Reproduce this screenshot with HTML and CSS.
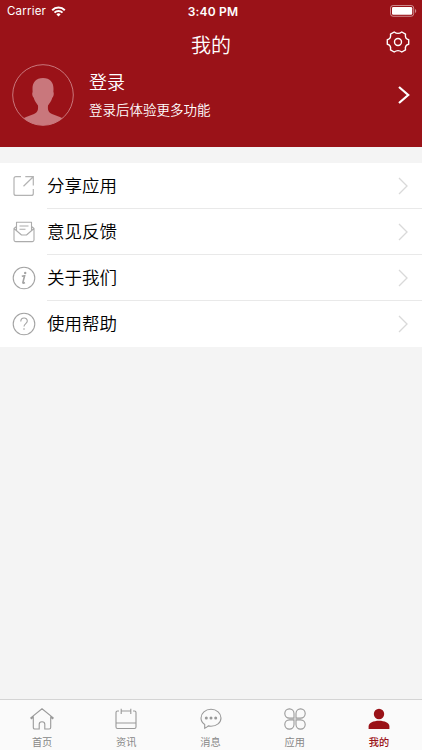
FILE: index.html
```html
<!DOCTYPE html>
<html lang="zh-CN">
<head>
  <meta charset="UTF-8">
  <meta name="viewport" content="width=device-width, initial-scale=1.0">
  <title>我的</title>
  <link rel="stylesheet" href="styles.css">
</head>
<body>
  <header class="header">
    <div class="status-bar">
      <div class="carrier">
        <span>Carrier</span>
        <svg width="15" height="11" viewBox="0 0 14 11" fill="none" stroke="#fff" stroke-width="2">
          <path d="M.7 4.2a8.9 8.9 0 0 1 12.6 0M3 6.6a5.6 5.6 0 0 1 8 0"/>
          <path d="M4.9 8.4a3 3 0 0 1 4.2 0L7 10.6z" fill="#fff" stroke="none"/>
        </svg>
      </div>
      <span class="time">3:40 PM</span>
      <svg class="battery" width="27" height="12" viewBox="0 0 27 12">
        <rect x=".5" y=".5" width="23.2" height="10.8" rx="2.6" fill="none" stroke="#fff" stroke-opacity=".5"/>
        <rect x="2" y="2" width="20.2" height="7.8" rx="1.2" fill="#fff"/>
        <path d="M25 4v4c1.7-.7 1.7-3.3 0-4z" fill="#fff" fill-opacity=".5"/>
      </svg>
    </div>
    <div class="title-bar">
      <h1>我的</h1>
      <svg class="settings" width="24" height="22" viewBox="0 0 24 22" fill="none" stroke="#fff" stroke-width="1.4" stroke-linejoin="round">
        <path d="M8.2 1Q12 3.8 15.8 1L19.5 3.2Q18.6 7.8 22.7 8.8V13.2Q18.6 14.2 19.5 18.8L15.8 21Q12 18.2 8.2 21L4.5 18.8Q5.4 14.2 1.3 13.2V8.8Q5.4 7.8 4.5 3.2Z"/>
        <circle cx="12" cy="11" r="3.5"/>
      </svg>
    </div>
    <div class="user">
      <svg class="avatar" width="62" height="62" viewBox="0 0 62 62">
        <circle cx="31" cy="31" r="30.3" fill="none" stroke="#c9777c" stroke-width="1"/>
        <path d="M31 14C24 14 20.3 18.5 20.5 25L20.6 28C19.8 29 20.3 32.8 21.7 33.8C22.5 36.8 24.5 39.5 26 41.5C26.3 45.5 26 48 22 50C18.500 51.700 15 52 11.500 54.300A30.300 30.300 0 0 0 31 61.300A30.300 30.300 0 0 0 50.500 54.300C47 52 43.500 51.700 40 50C36 48 35.700 45.500 36 41.500C37.500 39.500 39.500 36.800 40.300 33.800C41.700 32.800 42.200 29 41.400 28L41.500 25C41.700 18.500 38 14 31 14Z" fill="#c9777c"/>
      </svg>
      <div class="user-info">
        <h2>登录</h2>
        <p>登录后体验更多功能</p>
      </div>
      <svg class="user-arrow" width="12" height="18" viewBox="0 0 12 18" fill="none" stroke="#fff" stroke-width="2.2">
        <path d="M1 1l9.2 8L1 17"/>
      </svg>
    </div>
  </header>

  <ul class="menu">
    <li class="menu-item">
      <svg class="menu-icon" width="24" height="24" viewBox="0 0 24 24" fill="none" stroke="#b3b3b3" stroke-width="1.2">
        <path d="M9 2.6H4Q2 2.6 2 4.6V19.4Q2 21.4 4 21.4H19.3Q21.3 21.4 21.3 19.4V15M13.3 2.6H21.3V11.5M21 3L11.5 12.3"/>
      </svg>
      <div class="menu-label">
        <span>分享应用</span>
        <svg class="arrow" width="10" height="18" viewBox="0 0 10 18"><path d="M1 1l8 8-8 8"/></svg>
      </div>
    </li>
    <li class="menu-item">
      <svg class="menu-icon" width="24" height="24" viewBox="0 0 24 24" fill="none" stroke="#acacac" stroke-width="1.1" stroke-linejoin="round">
        <path d="M4.500 6.500L2 8.500V20Q2 21.600 3.600 21.600H20.400Q22 21.600 22 20V8.500L19.500 6.500M4.500 10.500V2.300H19.500V10.500M2 8.500L9.500 15H14.500L22 8.500M7.500 6H16.500M7.500 9.200H13.500"/>
      </svg>
      <div class="menu-label">
        <span>意见反馈</span>
        <svg class="arrow" width="10" height="18" viewBox="0 0 10 18"><path d="M1 1l8 8-8 8"/></svg>
      </div>
    </li>
    <li class="menu-item">
      <svg class="menu-icon" width="24" height="24" viewBox="0 0 24 24" fill="none" stroke="#a3a3a3">
        <circle cx="12" cy="12" r="10.8" stroke-width="1.1"/>
        <path d="M9.8 10.2l2.800-.5-1.700 6.600q-.2 1.500 2 .2" stroke-width="1.6"/>
        <circle cx="13.2" cy="6.9" r="1.2" fill="#a3a3a3" stroke="none"/>
      </svg>
      <div class="menu-label">
        <span>关于我们</span>
        <svg class="arrow" width="10" height="18" viewBox="0 0 10 18"><path d="M1 1l8 8-8 8"/></svg>
      </div>
    </li>
    <li class="menu-item">
      <svg class="menu-icon" width="24" height="24" viewBox="0 0 24 24" fill="none" stroke="#a3a3a3" stroke-width="1.1">
        <circle cx="12" cy="12" r="10.8"/>
        <path d="M8.800 9.600c0-4.700 6.500-4.600 6.500-.6 0 2.500-3.300 2.700-3.300 5.600"/>
        <circle cx="12" cy="17" r=".8" fill="#a3a3a3" stroke="none"/>
      </svg>
      <div class="menu-label">
        <span>使用帮助</span>
        <svg class="arrow" width="10" height="18" viewBox="0 0 10 18"><path d="M1 1l8 8-8 8"/></svg>
      </div>
    </li>
  </ul>

  <nav class="tab-bar">
    <div class="tab">
      <svg width="24" height="22" viewBox="0 0 24 22">
        <path d="M3.3 9.3L1.3 10.7.8 9.9 12 .8l11.2 9.1-.5.8-2-1.4V19.5Q20.7 21 19.2 21H14.8V16.2Q14.8 13.8 12 13.8T9.2 16.2V21H4.8Q3.3 21 3.3 19.5Z"/>
      </svg>
      <span>首页</span>
    </div>
    <div class="tab">
      <svg width="24" height="22" viewBox="0 0 24 22">
        <path d="M5 3H3.5Q2 3 2 4.5V19Q2 20.5 3.5 20.5H20.5Q22 20.5 22 19V4.5Q22 3 20.5 3H19M7.5 3H16.5M7.2.8V6M16.8.8V6M2 15H22"/>
      </svg>
      <span>资讯</span>
    </div>
    <div class="tab">
      <svg width="24" height="22" viewBox="0 0 24 22">
        <path d="M5.7 20.3V16.5C3.2 14.8 2 12.6 2 10 2 5.2 6.4 1.3 12 1.3S22 5.2 22 10s-4.4 8.2-10 8.2c-1 0-1.9-.1-2.7-.3Q8 19.3 5.7 20.3Z"/>
        <g class="dots"><circle cx="7.3" cy="10" r="1.5"/><circle cx="12" cy="10" r="1.5"/><circle cx="16.7" cy="10" r="1.5"/></g>
      </svg>
      <span>消息</span>
    </div>
    <div class="tab">
      <svg width="24" height="22" viewBox="0 0 24 22">
        <path d="M11 10.1H6.4A4.6 4.6 0 1 1 11 5.5ZM13 10.1H17.6A4.6 4.6 0 1 0 13 5.5ZM11 11.9H6.4A4.6 4.6 0 1 0 11 16.5ZM13 11.9H17.6A4.6 4.6 0 1 1 13 16.5Z"/>
      </svg>
      <span>应用</span>
    </div>
    <div class="tab active">
      <svg width="24" height="22" viewBox="0 0 24 22">
        <circle cx="12" cy="6" r="5.2"/>
        <path d="M1.6 21V18.4C1.6 14.9 6.5 12.8 12 12.8S22.4 14.9 22.4 18.4V21Z"/>
      </svg>
      <span>我的</span>
    </div>
  </nav>
</body>
</html>
```

FILE: styles.css
```css
* {
  box-sizing: border-box;
}
body {
  margin: 0;
  height: 750px;
  display: flex;
  flex-direction: column;
  overflow: hidden;
  background-color: #f4f4f4;
  font-family: "Noto Sans CJK SC", sans-serif;
  font-weight: 350;
}
svg {
  display: block;
  flex-shrink: 0;
}
h1, h2, p, ul {
  margin: 0;
  padding: 0;
  font-weight: 350;
}
.header {
  height: 147px;
  background-color: #9a1218;
  color: white;
}
.status-bar {
  display: grid;
  grid-template-columns: 1fr auto 1fr;
  align-items: center;
  height: 22px;
  padding: 0 5px 0 7px;
  font-family: Inter, sans-serif;
  font-size: 11.5px;
  font-weight: 400;
}
.carrier {
  display: flex;
  align-items: center;
  gap: 5px;
  letter-spacing: 0.2px;
}
.time {
  padding-left: 2px;
  font-size: 12px;
  font-weight: 600;
  letter-spacing: 0.2px;
}
.battery {
  justify-self: end;
  margin-bottom: 1px;
}
.title-bar {
  display: grid;
  grid-template-columns: 1fr auto 1fr;
  align-items: center;
  height: 42px;
  padding: 0 12px;
}
.title-bar h1 {
  grid-column: 2;
  padding-top: 3px;
  font-size: 20px;
  line-height: 30px;
}
.settings {
  justify-self: end;
  margin-bottom: 2px;
}
.user {
  display: flex;
  align-items: center;
  height: 62px;
  padding: 0 12px;
}
.user-info {
  flex: 1;
  margin-left: 15px;
  padding-bottom: 4px;
}
.user-info h2 {
  font-size: 18px;
  line-height: 32px;
}
.user-info p {
  font-size: 13.5px;
  line-height: 24px;
}
.menu {
  margin-top: 16px;
  background-color: white;
  list-style: none;
}
.menu-item {
  display: flex;
  align-items: center;
  height: 46px;
  padding-left: 12px;
}
.menu-label {
  display: flex;
  flex: 1;
  align-items: center;
  justify-content: space-between;
  height: 46px;
  margin-left: 11px;
  padding-right: 14px;
  border-bottom: 1px solid #e9e9e9;
  font-size: 17.5px;
  color: black;
}
.menu-label span {
  padding-bottom: 2px;
}
.menu-item:last-child .menu-label {
  border-bottom-color: transparent;
}
.arrow {
  fill: none;
  stroke: #d9d9d9;
  stroke-width: 1.3;
}
.tab-bar {
  display: flex;
  height: 51px;
  margin-top: auto;
  padding-right: 1px;
  border-top: 1px solid #d4d4d4;
  background-color: #fafafa;
}
.tab {
  display: flex;
  flex: 1;
  flex-direction: column;
  align-items: center;
  padding-top: 8px;
  color: #888;
  font-size: 10.2px;
  font-weight: 400;
  line-height: 16px;
}
.tab svg {
  margin-bottom: 4px;
  fill: none;
  stroke: #999;
  stroke-width: 1.1;
}
.tab .dots {
  fill: #999;
  stroke: none;
}
.tab.active {
  color: #9a1218;
  font-weight: 500;
}
.tab.active svg {
  fill: #9a1218;
  stroke: none;
}
```
